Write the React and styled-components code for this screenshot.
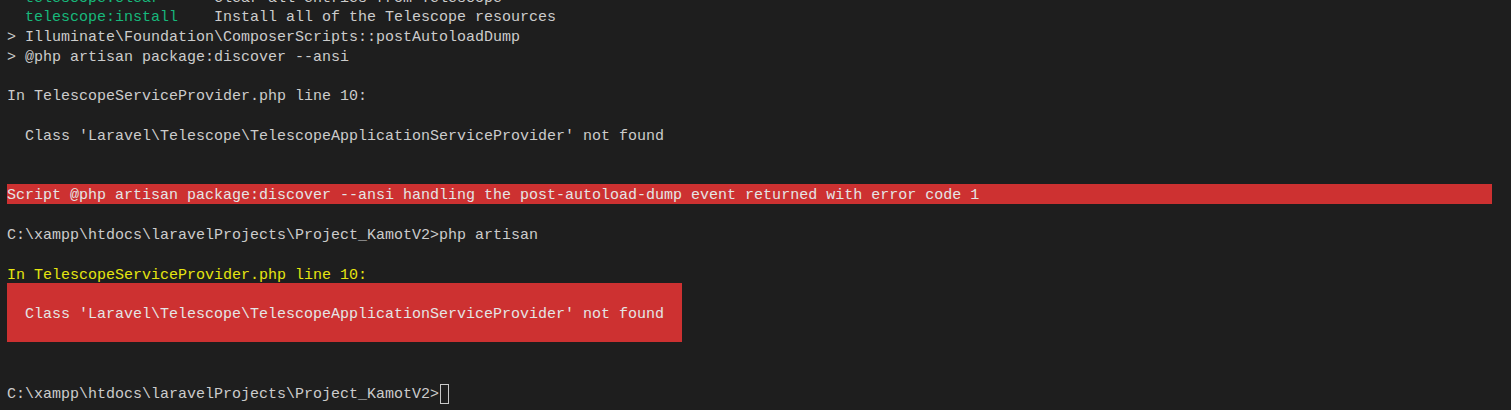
import styled, { createGlobalStyle } from "styled-components";

const GlobalStyle = createGlobalStyle`
  html, body {
    margin: 0;
    padding: 0;
    background: #1e1e1e;
    overflow: hidden;
  }
`;

const Terminal = styled.div`
  width: 1485px;
  height: 430px;
  margin-top: -14px;
  padding-left: 7px;
  background: #1e1e1e;
  color: #cccccc;
  font-family: "Liberation Mono", "DejaVu Sans Mono", monospace;
  font-size: 15px;
  line-height: 19.8px;
`;

const Line = styled.div`
  box-sizing: border-box;
  white-space: pre;
  height: 19.8px;
  padding-top: 2.5px;
  color: ${(p) => p.$color || "#cccccc"};
  background: ${(p) => (p.$error ? "#cd3131" : "transparent")};
`;

const Green = styled.span`
  color: #17b87b;
`;

const ErrorBlock = styled.div`
  width: 75ch;
  background: #cd3131;
  color: #e5e5e5;
`;

const Cursor = styled.span`
  display: inline-block;
  width: 9px;
  height: 20px;
  margin-left: 1px;
  vertical-align: -6px;
  border: 1px solid #c8c8c8;
  box-sizing: border-box;
`;

const PROMPT = "C:\\xampp\\htdocs\\laravelProjects\\Project_KamotV2>";
const CLASS_MSG =
  "  Class 'Laravel\\Telescope\\TelescopeApplicationServiceProvider' not found";

function App() {
  return (
    <>
      <GlobalStyle />
      <Terminal>
        <Line>
          {"  "}
          <Green>telescope:clear</Green>
          {"      Clear all entries from Telescope"}
        </Line>
        <Line>
          {"  "}
          <Green>telescope:install</Green>
          {"    Install all of the Telescope resources"}
        </Line>
        <Line>{"> Illuminate\\Foundation\\ComposerScripts::postAutoloadDump"}</Line>
        <Line>{"> @php artisan package:discover --ansi"}</Line>
        <Line />
        <Line>In TelescopeServiceProvider.php line 10:</Line>
        <Line />
        <Line>{CLASS_MSG}</Line>
        <Line />
        <Line />
        <Line $error $color="#e5e5e5">
          Script @php artisan package:discover --ansi handling the post-autoload-dump event returned with error code 1
        </Line>
        <Line />
        <Line>{PROMPT + "php artisan"}</Line>
        <Line />
        <Line $color="#e5e510">In TelescopeServiceProvider.php line 10:</Line>
        <ErrorBlock>
          <Line $color="#e5e5e5" />
          <Line $color="#e5e5e5">{CLASS_MSG}</Line>
          <Line $color="#e5e5e5" />
        </ErrorBlock>
        <Line />
        <Line />
        <Line>
          {PROMPT}
          <Cursor />
        </Line>
      </Terminal>
    </>
  );
}

export default App;
